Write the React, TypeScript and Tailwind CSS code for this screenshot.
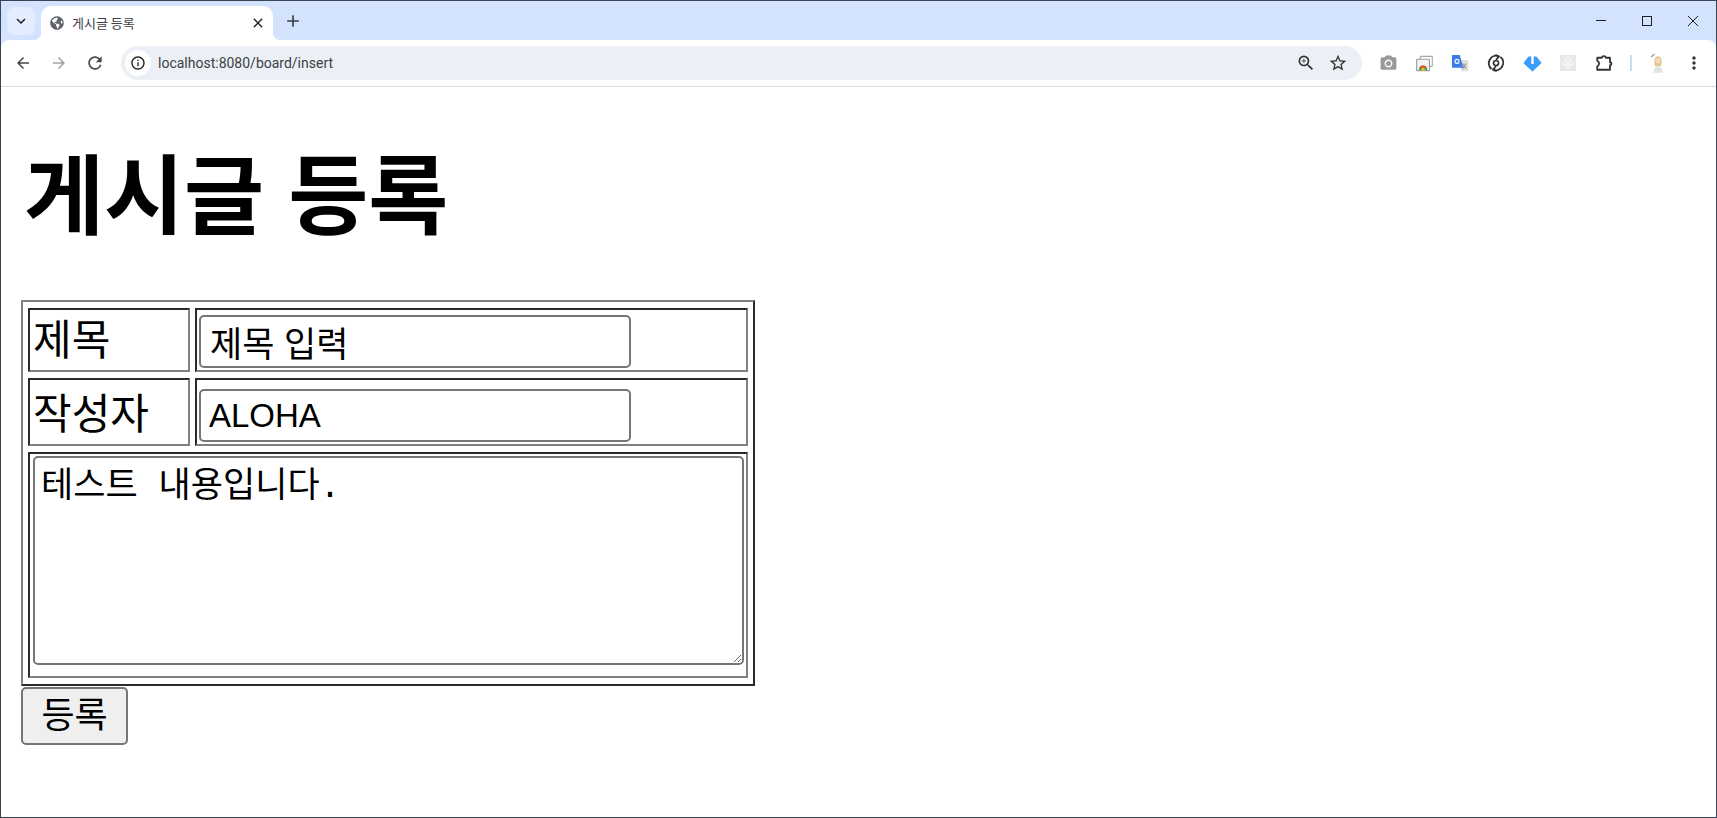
import React from "react";
import { FaGlobeAmericas } from "react-icons/fa";
import {
  MdArrowBack,
  MdArrowForward,
  MdRefresh,
  MdInfoOutline,
  MdZoomIn,
  MdStarBorder,
  MdMoreVert,
  MdPhotoCamera,
  MdClose,
  MdAdd,
  MdKeyboardArrowDown,
} from "react-icons/md";

const cellClass =
  "border-2 border-solid border-t-[#2b2b2b] border-l-[#2b2b2b] border-r-[#808080] border-b-[#808080]";
const fieldClass =
  "block border-2 border-solid border-[#767676] rounded-[5px] bg-white text-black outline-none";
const sans = "font-['Liberation_Sans','Noto_Sans_CJK_KR',sans-serif]";

const WindowsIcon = () => (
  <svg width="17" height="17" viewBox="0 0 24 24" fill="none">
    <rect x="6" y="2" width="17" height="14" rx="1" stroke="#a8a8a8" strokeWidth="1.6" />
    <rect x="1" y="6" width="18" height="16" rx="1" fill="#f4f4f4" stroke="#9a9a9a" strokeWidth="1.6" />
    <path d="M4 21a6 6 0 0 1 12 0z" fill="#34a853" />
    <path d="M4.5 18a6 6 0 0 1 11 0z" fill="#ea4335" />
    <circle cx="10" cy="20" r="2.2" fill="#fbbc05" />
  </svg>
);

const TranslateIcon = () => (
  <svg width="17" height="17" viewBox="0 0 24 24">
    <path d="M12 7h11v16H13z" fill="#dedede" />
    <path d="M15 12l5 7M20 12l-5 7" stroke="#8a8a8a" strokeWidth="1.5" />
    <path d="M0 0h11l5 18H0z" fill="#3f7be6" />
    <circle cx="7" cy="9" r="2.8" fill="none" stroke="#fff" strokeWidth="1.5" />
  </svg>
);

const SyncIcon = () => (
  <svg width="18" height="18" viewBox="0 0 24 24" fill="none" stroke="#333" strokeWidth="2.6">
    <path d="M16 3A10 10 0 0 0 6 20" />
    <path d="M8 21A10 10 0 0 0 18 4" />
    <path d="M11 1l5 2.500-4 4M13 23l-5-2.500 4-4" strokeWidth="2.200" />
    <circle cx="12" cy="12" r="3.400" strokeWidth="2.200" />
  </svg>
);

const BlueArrowIcon = () => (
  <svg width="19" height="19" viewBox="0 0 24 24">
    <path d="M7 3h3.500v9.500h3V3H17l6.500 8.500L12 22 .5 11.500z" fill="#3b9dfb" />
  </svg>
);

const GrayTileIcon = () => (
  <svg width="16" height="16" viewBox="0 0 24 24">
    <rect x="0" y="0" width="24" height="24" fill="#e8e8e8" />
    <g fill="none" stroke="#f8f8f8" strokeWidth="1.6">
      <circle cx="12" cy="7.5" r="3.200" />
      <circle cx="12" cy="16.500" r="3.200" />
      <circle cx="7.500" cy="12" r="3.200" />
      <circle cx="16.500" cy="12" r="3.200" />
    </g>
  </svg>
);

const PuzzleIcon = () => (
  <svg width="18" height="18" viewBox="0 0 24 24" fill="none" stroke="#333" strokeWidth="2.4" strokeLinejoin="round">
    <path d="M3 5h6a2.800 2.800 0 0 1 5.500 0H20v6a2 2 0 0 1 0 4v6H3v-4.500a4.500 4.500 0 0 0 2.500-3.500A4.500 4.500 0 0 0 3 9z" />
  </svg>
);

const AvatarIcon = () => (
  <svg width="18" height="22" viewBox="0 0 24 28">
    <path d="M3 6l4-4" stroke="#666" strokeWidth="1.400" />
    <path d="M6 27c0-6 3-9 6-9s6 3 6 9z" fill="#e4e4e4" />
    <path d="M7 14c0-6 2-9 5-9s5 3 5 9l-1 4H8z" fill="#e3c88c" />
    <circle cx="12" cy="11" r="3.400" fill="#f3d9c6" />
  </svg>
);

const ToolIcon = ({ children }: { children: React.ReactNode }) => (
  <div className="w-[36px] h-[36px] flex items-center justify-center shrink-0">{children}</div>
);

const App: React.FC = () => {
  return (
    <div className={`${sans} w-full h-[818px] overflow-hidden bg-white border border-[#3a4454] flex flex-col`}>
      {/* tab strip */}
      <div className="h-[39px] bg-[#d3e3fd] flex items-end shrink-0">
        <div className="w-[28px] h-[28px] ml-[6px] mb-[5px] rounded-[8px] bg-[#e4edfd] flex items-center justify-center">
          <MdKeyboardArrowDown size={18} color="#1f1f1f" />
        </div>
        <div className="relative w-[232px] h-[34px] ml-[6px] bg-white rounded-t-[10px] flex items-center pl-[9px] pr-[7px]">
          <span className="absolute bottom-0 -left-[8px] w-[8px] h-[8px] bg-[radial-gradient(circle_at_0_0,#d3e3fd_8px,#ffffff_8.5px)]" />
          <span className="absolute bottom-0 -right-[8px] w-[8px] h-[8px] bg-[radial-gradient(circle_at_100%_0,#d3e3fd_8px,#ffffff_8.5px)]" />
          <FaGlobeAmericas size={14} color="#5f6368" />
          <span className="ml-[8px] text-[13px] text-[#3c4043] font-['Noto_Sans_CJK_KR',sans-serif]">게시글 등록</span>
          <MdClose size={16} color="#1f1f1f" className="ml-auto" />
        </div>
        <div className="w-[28px] h-[28px] ml-[6px] mb-[5px] flex items-center justify-center">
          <MdAdd size={20} color="#3c4043" />
        </div>
        <div className="ml-auto h-full flex">
          <div className="w-[46px] h-full flex items-center justify-center">
            <div className="w-[10px] h-px bg-[#1f1f1f]" />
          </div>
          <div className="w-[46px] h-full flex items-center justify-center">
            <div className="w-[10px] h-[10px] border border-[#1f1f1f]" />
          </div>
          <div className="w-[46px] h-full flex items-center justify-center">
            <svg width="12" height="12" viewBox="0 0 12 12" stroke="#1f1f1f" strokeWidth="1">
              <path d="M1 1l10 10M11 1L1 11" />
            </svg>
          </div>
        </div>
      </div>

      {/* toolbar */}
      <div className="bg-[#d3e3fd] shrink-0">
        <div className="h-[47px] bg-white border-b border-[#dadce0] flex items-center pl-[4px] pr-[5px] rounded-t-[8px]">
          <ToolIcon><MdArrowBack size={18} color="#474747" /></ToolIcon>
          <ToolIcon><MdArrowForward size={18} color="#a3a3a3" /></ToolIcon>
          <ToolIcon><MdRefresh size={20} color="#474747" /></ToolIcon>
          <div className="w-[1241px] h-[34px] ml-[8px] bg-[#ecf0f6] rounded-full flex items-center pl-[4px] pr-[8px] shrink-0">
            <div className="w-[26px] h-[26px] rounded-full bg-white flex items-center justify-center">
              <MdInfoOutline size={16} color="#1f1f1f" />
            </div>
            <span className="ml-[7px] text-[14px] text-[#3c4043] font-['Roboto',sans-serif]">localhost:8080/board/insert</span>
            <div className="ml-auto flex items-center">
              <div className="w-[32px] flex justify-center"><MdZoomIn size={20} color="#333" /></div>
              <div className="w-[32px] flex justify-center"><MdStarBorder size={20} color="#333" /></div>
            </div>
          </div>
          <div className="ml-[8px] flex items-center">
            <ToolIcon><MdPhotoCamera size={19} color="#999999" /></ToolIcon>
            <ToolIcon><WindowsIcon /></ToolIcon>
            <ToolIcon><TranslateIcon /></ToolIcon>
            <ToolIcon><SyncIcon /></ToolIcon>
            <ToolIcon><BlueArrowIcon /></ToolIcon>
            <ToolIcon><GrayTileIcon /></ToolIcon>
            <ToolIcon><PuzzleIcon /></ToolIcon>
            <div className="w-[2px] h-[16px] bg-[#c9daf3] mx-[8px]" />
            <ToolIcon><AvatarIcon /></ToolIcon>
            <ToolIcon><MdMoreVert size={20} color="#333" /></ToolIcon>
          </div>
        </div>
      </div>

      {/* page */}
      <div className="flex-1 pl-[20px] flex flex-col items-start text-black">
        <h1 className="text-[87px] leading-[90px] font-bold ml-[3px] mt-[66px] mb-[57px] font-['Liberation_Sans','Noto_Sans_CJK_KR',sans-serif]">
          게시글 등록
        </h1>
        <table className="w-[734px] border-separate border-spacing-x-[5px] border-spacing-y-[6px] border-2 border-solid border-t-[#808080] border-l-[#808080] border-r-[#2b2b2b] border-b-[#2b2b2b] table-fixed">
          <tbody>
            <tr>
              <td className={`${cellClass} w-[162px] h-[64px] pl-[3px] pr-[2px] pt-[3px] pb-[2px] text-[42px] leading-none`}>제목</td>
              <td className={`${cellClass} h-[64px] pt-[5px] pb-[2px] px-[2px] align-top`}>
                <input
                  type="text"
                  defaultValue="제목 입력"
                  className={`${fieldClass} w-[432px] h-[53px] px-[9px] text-[35px]`}
                />
              </td>
            </tr>
            <tr>
              <td className={`${cellClass} h-[68px] pl-[3px] pr-[2px] pt-[7px] pb-[2px] text-[42px] leading-none`}>작성자</td>
              <td className={`${cellClass} h-[68px] pt-[9px] pb-[2px] px-[2px] align-top`}>
                <input
                  type="text"
                  defaultValue="ALOHA"
                  className={`${fieldClass} w-[432px] h-[53px] px-[8px] text-[33px]`}
                />
              </td>
            </tr>
            <tr>
              <td colSpan={2} className={`${cellClass} h-[226px] pt-[2px] pb-[11px] px-[3px] align-top`}>
                <textarea
                  defaultValue="테스트 내용입니다."
                  className={`${fieldClass} w-[711px] h-[209px] px-[6px] pt-[10px] pb-[3px] text-[35px] leading-[40px] font-['Liberation_Mono','Noto_Sans_CJK_KR',monospace]`}
                />
              </td>
            </tr>
          </tbody>
        </table>
        <button
          type="button"
          className="w-[107px] h-[58px] mt-px bg-[#efefef] border-2 border-solid border-[#767676] rounded-[5px] text-[36px] text-black"
        >
          등록
        </button>
      </div>
    </div>
  );
};

export default App;
